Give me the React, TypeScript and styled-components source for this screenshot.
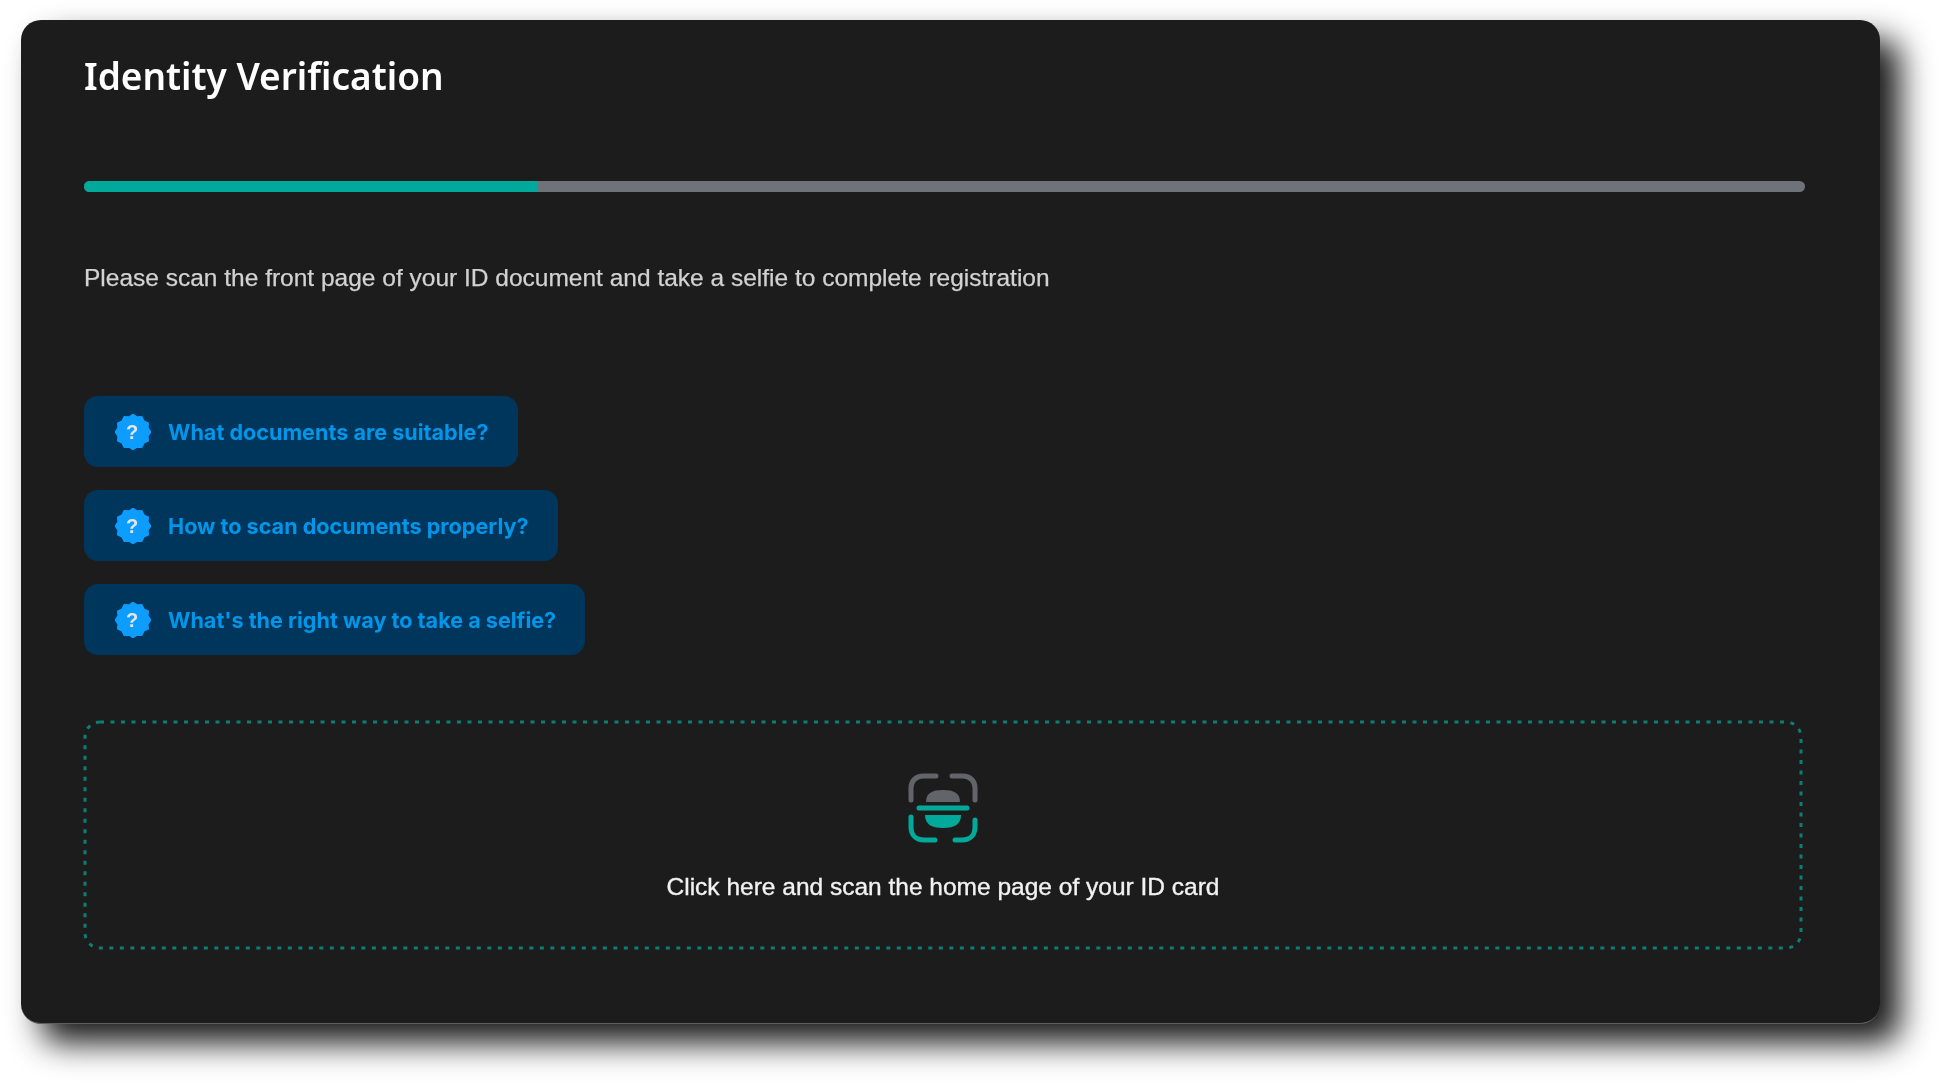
import React from "react";
import styled, { createGlobalStyle } from "styled-components";

const Global = createGlobalStyle`
  html, body { margin: 0; padding: 0; background: #fff; }
  body { overflow: hidden; }
`;

const Page = styled.main`
  width: 1939px;
  height: 1084px;
  box-sizing: border-box;
  padding: 20px 0 0 21px;
  background: #fff;
`;

const Card = styled.section`
  width: 1859px;
  height: 1004px;
  box-sizing: border-box;
  padding: 33px 78px 0 63px;
  background: #1c1c1c;
  border-radius: 20px;
  border-bottom: 1px solid #5e5e5e;
  box-shadow: 20px 19px 32px rgba(0, 0, 0, 0.9);
`;

const Content = styled.div`
  display: flex;
  flex-direction: column;
  align-items: flex-start;
  filter: blur(0.65px);
`;

const Title = styled.h1`
  margin: 0;
  font: 600 37px/46px "Noto Sans", sans-serif;
  color: #fff;
`;

const Track = styled.div`
  width: 1721px;
  height: 11px;
  margin-top: 82px;
  border-radius: 6px;
  background: #6f7379;
  overflow: hidden;
`;

const Fill = styled.div<{ $pct: number }>`
  width: ${(p) => p.$pct}%;
  height: 100%;
  background: #00a99a;
`;

const Description = styled.p`
  margin: 71px 0 0;
  font: 400 24.5px/30px "Liberation Sans", Arial, sans-serif;
  -webkit-text-stroke: 0.25px #d2d2d2;
  color: #d2d2d2;
`;

const Help = styled.div`
  display: flex;
  flex-direction: column;
  align-items: flex-start;
  gap: 23px;
  margin-top: 103px;
`;

const HelpButton = styled.button`
  display: flex;
  align-items: center;
  gap: 17px;
  height: 71px;
  box-sizing: border-box;
  padding: 0 29px 0 31px;
  border: 0;
  border-radius: 14px;
  background: #00365c;
  font: 700 21.6px/22px Inter, sans-serif;
  color: #0096ea;
`;

const Badge = styled.span`
  position: relative;
  display: flex;
  align-items: center;
  justify-content: center;
  width: 36px;
  height: 36px;
`;

const BadgeShape = styled.svg`
  position: absolute;
  inset: 0;
`;

const BadgeMark = styled.span`
  position: relative;
  left: -1px;
  font: 700 20px/1 "Liberation Sans", sans-serif;
  color: #e4e4e4;
`;

const Drop = styled.button`
  position: relative;
  display: flex;
  flex-direction: column;
  align-items: center;
  width: 1718px;
  height: 228px;
  box-sizing: border-box;
  margin-top: 66px;
  padding: 52px 0 0;
  background: transparent;
  border: 0;
`;

const DropOutline = styled.svg`
  position: absolute;
  inset: 0;
  overflow: visible;
`;

const ScanIcon = styled.svg`
  display: block;
`;

const DropLabel = styled.span`
  margin-top: 29px;
  font: 400 24.5px/30px "Liberation Sans", Arial, sans-serif;
  -webkit-text-stroke: 0.35px #f2f2f2;
  color: #f2f2f2;
`;

const badgePoints = (() => {
  const pts: string[] = [];
  for (let i = 0; i < 24; i++) {
    const a = (i / 24) * Math.PI * 2 - Math.PI / 2;
    const r = i % 2 === 0 ? 17.6 : 15.4;
    pts.push(`${(18 + r * Math.cos(a)).toFixed(2)},${(18 + r * Math.sin(a)).toFixed(2)}`);
  }
  return pts.join(" ");
})();

const questions = [
  "What documents are suitable?",
  "How to scan documents properly?",
  "What's the right way to take a selfie?",
];

export default function App() {
  return (
    <Page>
      <Global />
      <Card>
        <Content>
          <Title>Identity Verification</Title>
          <Track>
            <Fill $pct={26.4} />
          </Track>
          <Description>
            Please scan the front page of your ID document and take a selfie to complete registration
          </Description>
          <Help>
            {questions.map((q) => (
              <HelpButton key={q}>
                <Badge>
                  <BadgeShape width="36" height="36" viewBox="0 0 36 36">
                    <polygon points={badgePoints} fill="#0d9dff" stroke="#0d9dff" strokeWidth="1.5" strokeLinejoin="round" />
                  </BadgeShape>
                  <BadgeMark>?</BadgeMark>
                </Badge>
                {q}
              </HelpButton>
            ))}
          </Help>
          <Drop>
            <DropOutline width="1718" height="228" viewBox="0 0 1718 228" fill="none">
              <rect x="1" y="1" width="1716" height="226" rx="15" stroke="#0b7f75" strokeWidth="3" strokeDasharray="4 6.5" />
            </DropOutline>
            <ScanIcon width="70" height="70" viewBox="0 0 70 70" fill="none">
              <path d="M3 27V15C3 8 8 3 15 3H28" stroke="#626469" strokeWidth="5" strokeLinecap="round" />
              <path d="M44 3H55C62 3 67 8 67 15V27" stroke="#626469" strokeWidth="5" strokeLinecap="round" />
              <path d="M18 29C18 20 24 17 35 17C46 17 52 20 52 29Z" fill="#626469" />
              <path d="M11 35H59" stroke="#00a99a" strokeWidth="5" strokeLinecap="round" />
              <path d="M17 42H53C53 51 47 55 35 55C23 55 17 51 17 42Z" fill="#00a99a" />
              <path d="M3 44V54C3 62 8 67 16 67H27" stroke="#00a99a" strokeWidth="5" strokeLinecap="round" />
              <path d="M47 67H54C62 67 67 62 67 54V47" stroke="#00a99a" strokeWidth="5" strokeLinecap="round" />
            </ScanIcon>
            <DropLabel>Click here and scan the home page of your ID card</DropLabel>
          </Drop>
        </Content>
      </Card>
    </Page>
  );
}
